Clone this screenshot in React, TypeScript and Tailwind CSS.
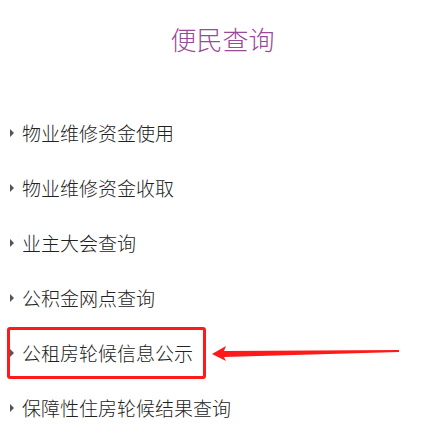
const ITEMS = [
  '物业维修资金使用',
  '物业维修资金收取',
  '业主大会查询',
  '公积金网点查询',
  '公租房轮候信息公示',
  '保障性住房轮候结果查询',
];

const FONT = { fontFamily: '"Noto Sans CJK SC", "Noto Sans", sans-serif' };

export default function App() {
  return (
    <div className="w-[443px] h-[438px] bg-white overflow-hidden relative" style={FONT}>
      <h1 className="text-center text-[26px] leading-none font-light text-[#9a4a98] pt-[26px] pl-[2px]">
        便民查询
      </h1>
      <ul className="mt-[53px] flex flex-col">
        {ITEMS.map((item, i) => (
          <li key={item} className="h-[55px] flex items-center">
            <div
              className={
                i === 4
                  ? 'flex items-center h-[52px] ml-[7px] pr-[10px] border-[3px] border-[#ff1a1a] rounded-[3px]'
                  : 'flex items-center ml-[10px]'
              }
            >
              <span className="w-0 h-0 border-y-[4px] border-y-transparent border-l-[4px] border-l-[#555]" />
              <span className="ml-[8px] text-[19px] font-light text-[#222] leading-none">{item}</span>
            </div>
            {i === 4 && (
              <svg width="190" height="20" viewBox="0 0 190 20" className="ml-[6px]">
                <polygon points="0,11 14,3 12,8 187,7 187,9 12,14 14,18" fill="#ff1a1a" />
              </svg>
            )}
          </li>
        ))}
      </ul>
    </div>
  );
}
